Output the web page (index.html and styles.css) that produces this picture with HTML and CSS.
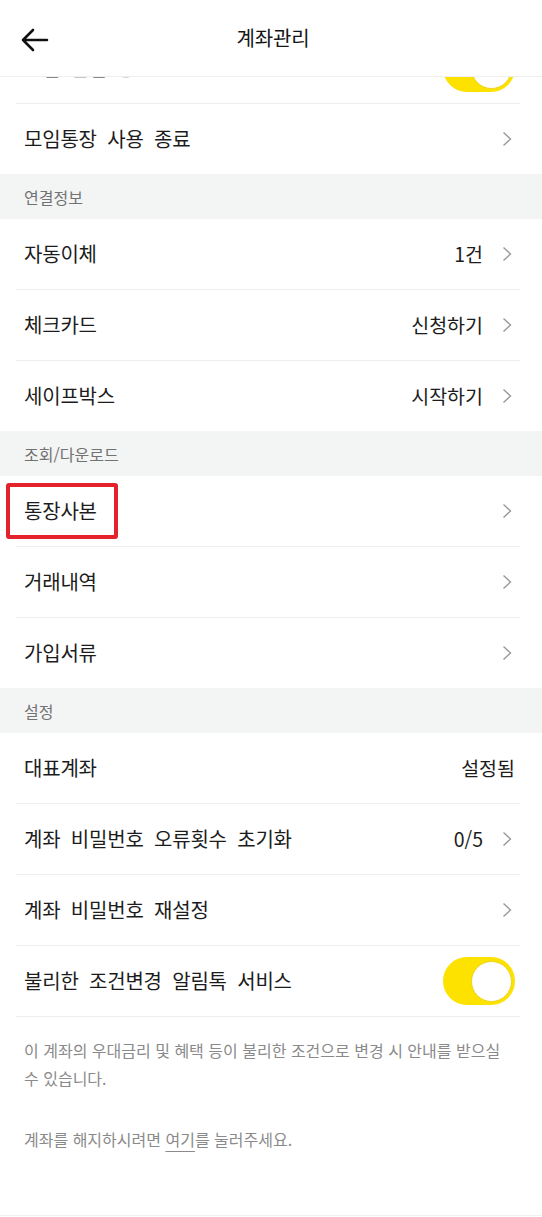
FILE: index.html
```html
<!DOCTYPE html>
<html lang="ko">
<head>
<meta charset="utf-8">
<title>계좌관리</title>
<link rel="stylesheet" href="styles.css">
</head>
<body>
<div class="screen">
  <header class="topbar">
    <button class="back" aria-label="뒤로">
      <svg width="30" height="26" viewBox="0 0 30 26"><path d="M3 13 H27 M13 3 L3 13 L13 23" fill="none" stroke="#111" stroke-width="2.6" stroke-linecap="round" stroke-linejoin="round"/></svg>
    </button>
    <h1 class="title">계좌관리</h1>
  </header>
  <div class="scroll">
    <div class="content">
      <div class="row bordered">
        <span class="label">모임 알림 <span class="info">ⓘ</span></span>
        <span class="toggle"><span class="knob"></span></span>
      </div>
      <div class="row">
        <span class="label">모임통장 사용 종료</span>
        <span class="chev"><svg width="16" height="16" viewBox="0 0 16 16"><path d="M4.5 1.5 L11.5 8 L4.5 14.5" fill="none" stroke="#9a9a9a" stroke-width="1.4"/></svg></span>
      </div>

      <div class="section">연결정보</div>
      <div class="row bordered">
        <span class="label">자동이체</span>
        <span class="right"><span class="value">1건</span><span class="chev"><svg width="16" height="16" viewBox="0 0 16 16"><path d="M4.5 1.5 L11.5 8 L4.5 14.5" fill="none" stroke="#9a9a9a" stroke-width="1.4"/></svg></span></span>
      </div>
      <div class="row bordered">
        <span class="label">체크카드</span>
        <span class="right"><span class="value">신청하기</span><span class="chev"><svg width="16" height="16" viewBox="0 0 16 16"><path d="M4.5 1.5 L11.5 8 L4.5 14.5" fill="none" stroke="#9a9a9a" stroke-width="1.4"/></svg></span></span>
      </div>
      <div class="row">
        <span class="label">세이프박스</span>
        <span class="right"><span class="value">시작하기</span><span class="chev"><svg width="16" height="16" viewBox="0 0 16 16"><path d="M4.5 1.5 L11.5 8 L4.5 14.5" fill="none" stroke="#9a9a9a" stroke-width="1.4"/></svg></span></span>
      </div>

      <div class="section">조회/다운로드</div>
      <div class="row bordered">
        <span class="label highlight">통장사본</span>
        <span class="chev"><svg width="16" height="16" viewBox="0 0 16 16"><path d="M4.5 1.5 L11.5 8 L4.5 14.5" fill="none" stroke="#9a9a9a" stroke-width="1.4"/></svg></span>
      </div>
      <div class="row bordered">
        <span class="label">거래내역</span>
        <span class="chev"><svg width="16" height="16" viewBox="0 0 16 16"><path d="M4.5 1.5 L11.5 8 L4.5 14.5" fill="none" stroke="#9a9a9a" stroke-width="1.4"/></svg></span>
      </div>
      <div class="row">
        <span class="label">가입서류</span>
        <span class="chev"><svg width="16" height="16" viewBox="0 0 16 16"><path d="M4.5 1.5 L11.5 8 L4.5 14.5" fill="none" stroke="#9a9a9a" stroke-width="1.4"/></svg></span>
      </div>

      <div class="section">설정</div>
      <div class="row bordered">
        <span class="label">대표계좌</span>
        <span class="value">설정됨</span>
      </div>
      <div class="row bordered">
        <span class="label">계좌 비밀번호 오류횟수 초기화</span>
        <span class="right"><span class="value">0/5</span><span class="chev"><svg width="16" height="16" viewBox="0 0 16 16"><path d="M4.5 1.5 L11.5 8 L4.5 14.5" fill="none" stroke="#9a9a9a" stroke-width="1.4"/></svg></span></span>
      </div>
      <div class="row bordered">
        <span class="label">계좌 비밀번호 재설정</span>
        <span class="chev"><svg width="16" height="16" viewBox="0 0 16 16"><path d="M4.5 1.5 L11.5 8 L4.5 14.5" fill="none" stroke="#9a9a9a" stroke-width="1.4"/></svg></span>
      </div>
      <div class="row bordered">
        <span class="label">불리한 조건변경 알림톡 서비스</span>
        <span class="toggle"><span class="knob"></span></span>
      </div>

      <p class="notice">이 계좌의 우대금리 및 혜택 등이 불리한 조건으로 변경 시 안내를 받으실 수 있습니다.</p>
      <p class="close-note">계좌를 해지하시려면 <a class="link" href="#">여기</a>를 눌러주세요.</p>
      <div class="bottom-line"></div>
    </div>
  </div>
</div>
</body>
</html>
```

FILE: styles.css
```css
* { box-sizing: border-box; }

html, body {
  margin: 0;
  padding: 0;
  background: #ffffff;
}

body {
  font-family: "Noto Sans CJK KR", "Noto Sans", "Liberation Sans", sans-serif;
  color: #1c1c1c;
}

.screen {
  width: 542px;
  height: 1217px;
  display: flex;
  flex-direction: column;
  overflow: hidden;
}

.topbar {
  flex: 0 0 77px;
  height: 77px;
  display: flex;
  align-items: center;
  justify-content: center;
  position: relative;
  border-bottom: 1px solid #efefef;
  background: #fff;
  padding-bottom: 1px;
}

.back {
  position: absolute;
  left: 20px;
  top: 27px;
  border: 0;
  background: none;
  padding: 0;
  width: 30px;
  height: 26px;
  display: flex;
}

.title {
  margin: 0 0 0 4px;
  font-size: 20px;
  font-weight: 400;
  color: #151515;
  letter-spacing: -0.2px;
}

.scroll {
  flex: 1;
  overflow: hidden;
}

.content {
  margin-top: -44px;
}

.row {
  height: 70px;
  margin: 0 22px 0 16px;
  padding: 0 5px 0 8px;
  display: flex;
  align-items: center;
  justify-content: space-between;
}

.row.bordered {
  height: 71px;
  border-bottom: 1px solid #eeeeee;
}

.label {
  font-size: 20px;
  line-height: 28px;
  color: #1c1c1c;
  letter-spacing: -0.2px;
  word-spacing: 5px;
}

.info {
  font-size: 16px;
  color: #bbb;
}

.right {
  display: flex;
  align-items: center;
  gap: 16px;
}

.value {
  font-size: 19.5px;
  line-height: 28px;
  color: #1c1c1c;
}

.chev {
  display: flex;
  width: 16px;
  height: 16px;
}

.section {
  height: 45px;
  background: #f3f4f4;
  padding-left: 24px;
  display: flex;
  align-items: center;
  font-size: 16px;
  color: #727272;
}

.toggle {
  width: 72px;
  height: 48px;
  border-radius: 24px;
  background: #fde200;
  display: flex;
  align-items: center;
  justify-content: flex-end;
  padding-right: 3px;
}

.knob {
  width: 41px;
  height: 41px;
  border-radius: 50%;
  background: #ffffff;
  border: 1.5px solid #e9d31a;
}

.highlight {
  position: relative;
}

.highlight::after {
  content: "";
  position: absolute;
  left: -18px;
  right: -21px;
  top: -14px;
  bottom: -14px;
  border: 4px solid #e3222b;
  border-radius: 3px;
}

.notice {
  margin: 0;
  padding: 19px 30px 0 24px;
  font-size: 16px;
  line-height: 28px;
  color: #8a8a8a;
  word-break: keep-all;
}

.close-note {
  margin: 33px 0 0;
  padding: 0 24px;
  font-size: 16px;
  line-height: 28px;
  color: #8a8a8a;
  word-break: keep-all;
}

.link {
  color: #8a8a8a;
  text-decoration: underline;
  text-underline-offset: 5px;
  text-decoration-thickness: 1px;
}

.bottom-line {
  margin-top: 62px;
  border-top: 1px solid #f0f0f0;
}
```
